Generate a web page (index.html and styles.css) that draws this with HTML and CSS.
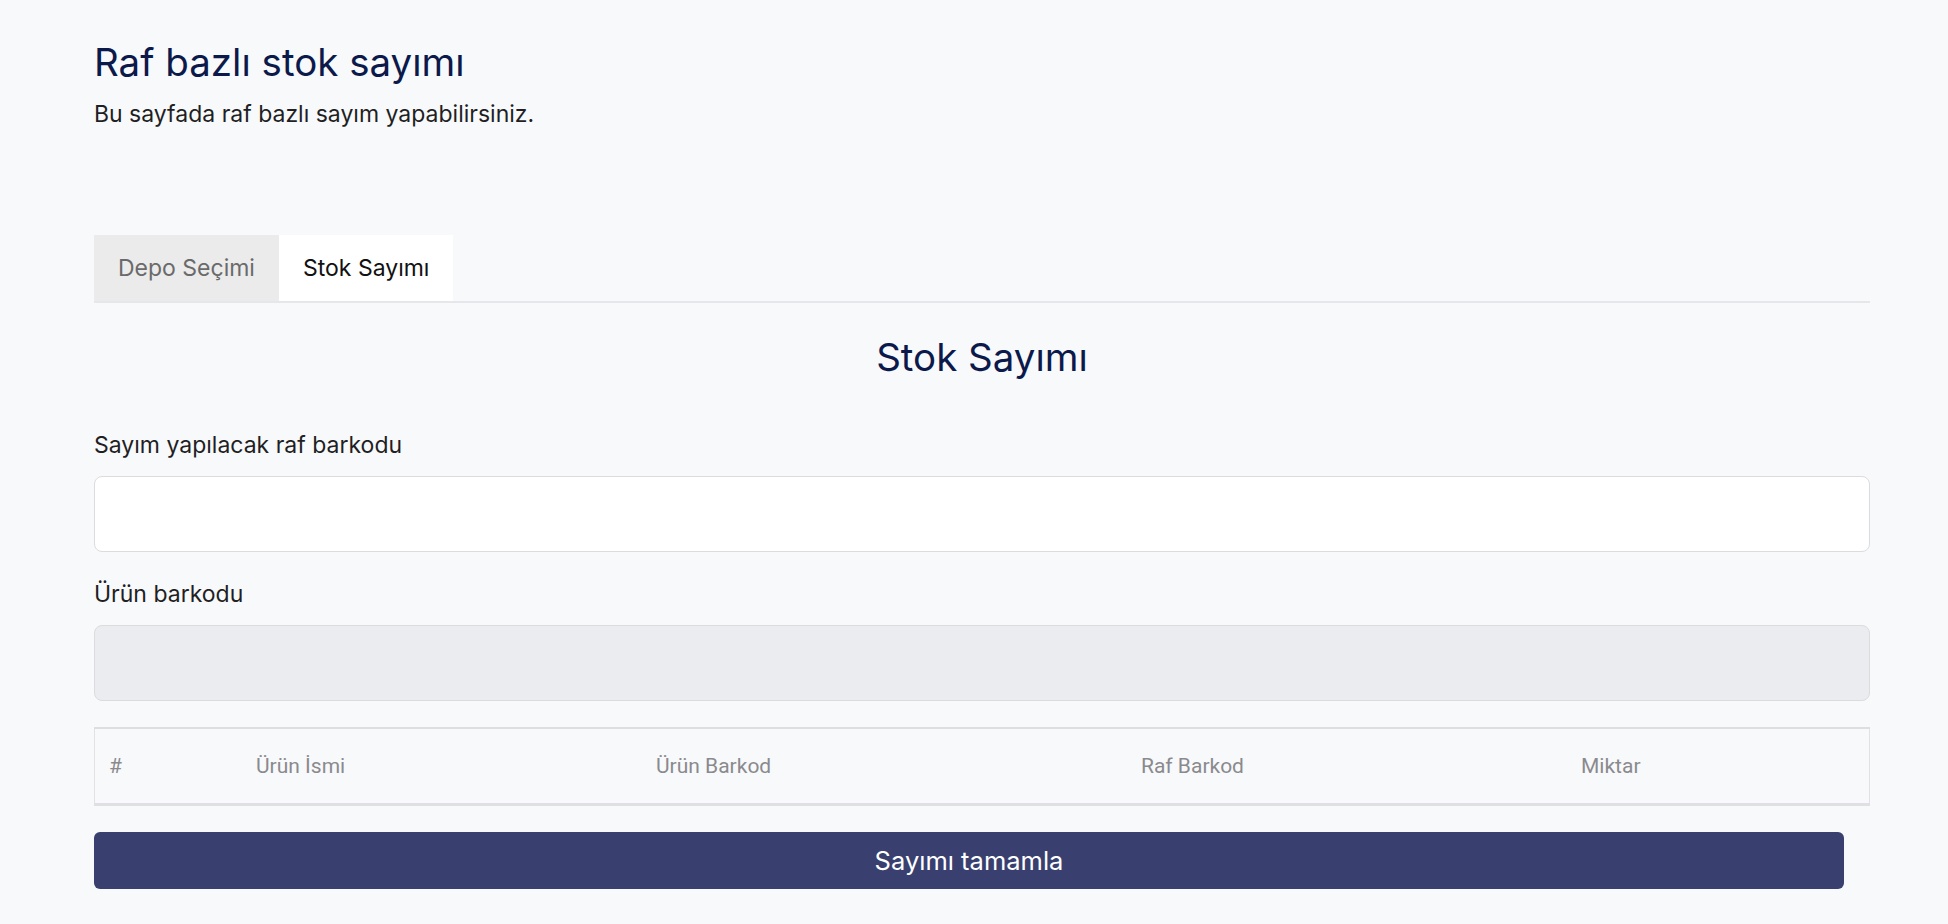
FILE: index.html
```html
<!DOCTYPE html>
<html lang="tr">
<head>
    <meta charset="UTF-8">
    <meta name="viewport" content="width=device-width, initial-scale=1.0">
    <title>Raf bazlı stok sayımı</title>
    <link rel="stylesheet" href="styles.css">
</head>
<body>
    <div class="page">
        <!-- Page header -->
        <h1 class="page-title">Raf bazlı stok sayımı</h1>
        <p class="page-desc">Bu sayfada raf bazlı sayım yapabilirsiniz.</p>

        <!-- Tabs -->
        <div class="tabs">
            <button class="tab">Depo Seçimi</button>
            <button class="tab active">Stok Sayımı</button>
        </div>

        <div class="tab-panel">
            <h2 class="panel-title">Stok Sayımı</h2>

            <label class="field-label" for="shelf">Sayım yapılacak raf barkodu</label>
            <input class="field-input" type="text" id="shelf" name="shelf">

            <label class="field-label" for="product">Ürün barkodu</label>
            <input class="field-input" type="text" id="product" name="product" disabled>

            <table class="count-table">
                <thead>
                    <tr>
                        <th class="col-no">#</th>
                        <th class="col-name">Ürün İsmi</th>
                        <th class="col-barcode">Ürün Barkod</th>
                        <th class="col-shelf">Raf Barkod</th>
                        <th class="col-qty">Miktar</th>
                    </tr>
                </thead>
                <tbody></tbody>
            </table>

            <button class="submit-btn">Sayımı tamamla</button>
        </div>
    </div>
</body>
</html>
```

FILE: styles.css
```css
body {
    margin: 0;
    background: #f8f9fb;
    font-family: Inter, "Noto Sans", sans-serif;
    color: #1f1f24;
}
.page {
    padding: 39px 78px 30px 94px;
}
.page-title {
    margin: 0;
    font-size: 38.5px;
    font-weight: 400;
    line-height: 46px;
    color: #0c1a4b;
}
.page-desc {
    margin: 15px 0 0;
    font-size: 23px;
    line-height: 28px;
}
.tabs {
    display: flex;
    margin-top: 107px;
    border-bottom: 2px solid #e6e7ea;
}
.tab {
    height: 66px;
    padding: 0 24px;
    border: none;
    background: #ebebeb;
    color: #6a6a6a;
    font-family: inherit;
    font-size: 23px;
}
.tab.active {
    background: #ffffff;
    color: #111;
}
.tab-panel {
    display: flex;
    flex-direction: column;
}
.panel-title {
    margin: 31px 0 0;
    text-align: center;
    font-size: 38.5px;
    font-weight: 400;
    line-height: 46px;
    color: #0c1a4b;
}
.field-label {
    margin-top: 51px;
    font-size: 23px;
    line-height: 28px;
}
.field-input + .field-label {
    margin-top: 28px;
}
.field-input {
    box-sizing: border-box;
    height: 76px;
    margin-top: 17px;
    border: 1px solid #dcdcdf;
    border-radius: 8px;
    background: #fff;
    font-family: inherit;
    font-size: 20px;
    padding: 0 16px;
}
.field-input:disabled {
    background: #ebecef;
}
.count-table {
    width: 100%;
    margin-top: 26px;
    border-collapse: collapse;
    border-top: 2px solid #dedee0;
    border-bottom: 3px solid #e0e0e4;
    border-left: 1px solid #e2e2e4;
    border-right: 1px solid #e2e2e4;
    font-family: Roboto, "Noto Sans", sans-serif;
}
.count-table th {
    height: 74px;
    padding: 0 14px;
    text-align: left;
    font-size: 21px;
    font-weight: 400;
    color: #8a8a8e;
}
.col-no { width: 119px; }
.col-name { width: 372px; }
.col-barcode { width: 457px; }
.col-shelf { width: 412px; }
.submit-btn {
    height: 57px;
    margin: 26px 26px 0 0;
    border: none;
    border-radius: 6px;
    background: #394070;
    color: #fff;
    font-family: inherit;
    font-size: 25.5px;
    cursor: pointer;
}
```
